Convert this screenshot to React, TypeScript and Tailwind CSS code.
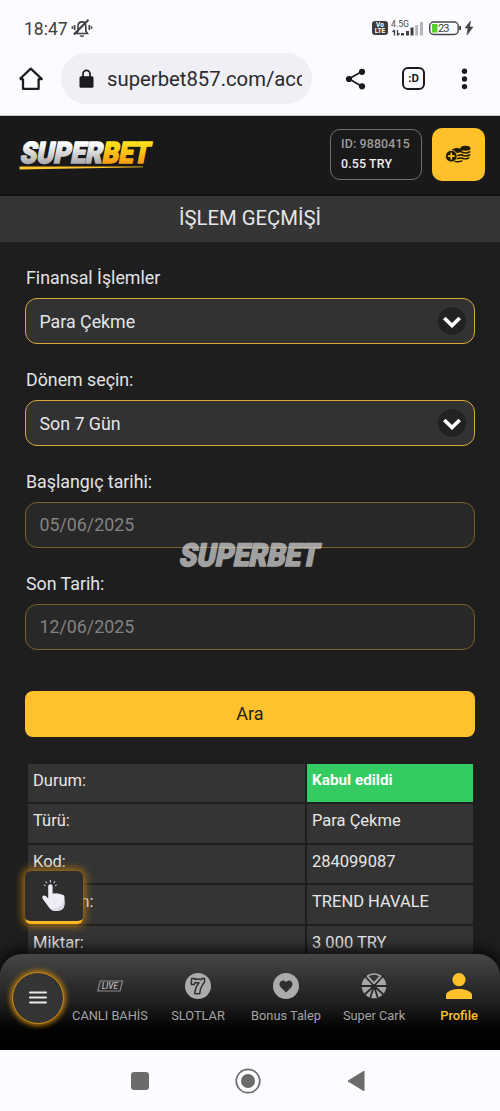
import React from 'react';

interface Row {
  label: string;
  value: string;
  success?: boolean;
}

const rows: Row[] = [
  { label: 'Durum:', value: 'Kabul edildi', success: true },
  { label: 'Türü:', value: 'Para Çekme' },
  { label: 'Kod:', value: '284099087' },
  { label: 'Yöntem:', value: 'TREND HAVALE' },
  { label: 'Miktar:', value: '3 000 TRY' },
];

function StatusBar() {
  return (
    <div className="flex h-14 shrink-0 items-center pl-6 pr-[25px] text-[#3d3d40]">
      <span className="mt-[2px] text-[17.5px]">18:47</span>
      <svg className="ml-[3px] h-[22px] w-[22px]" viewBox="0 0 22 22" fill="none" stroke="currentColor" strokeWidth="1.6">
        <path d="M5.5 16.5h11l-1.7-2.6V9.5c0-3-1.5-4.6-3.8-4.6S7 6.5 7 9.5v4.4z" />
        <path d="M2.8 17.5L17.5 2.8" strokeWidth="2" />
        <path d="M9.2 18.5q1.8 1.5 3.6 0" />
        <path d="M3.6 8v5M1.4 9.3v2.4M18.3 8v5M20.5 9.3v2.4" />
      </svg>
      <div className="ml-auto flex items-center">
        <div className="flex h-[14px] w-[16px] flex-col items-center justify-center rounded-[3px] bg-[#3d3d40] text-[6.5px] font-bold leading-[6px] text-white">
          <span>Vo</span>
          <span>LTE</span>
        </div>
        <svg className="ml-[2px] h-[18px] w-[34px]" viewBox="0 0 34 18">
          <text x="1" y="8" fontSize="8.5" fill="#4a4a4c" textLength="18" lengthAdjust="spacingAndGlyphs">4.5G</text>
          <path d="M4.500 11v5.500M2.500 13L4.500 11M7.500 11v5.500M7.500 16.500l2-2.300" stroke="#3d3d40" strokeWidth="1.3" fill="none" />
          <path d="M11 14h3v2.500h-3zM16 12h3v4.500h-3zM20.500 8.500h3v8h-3z" fill="#3d3d40" />
          <path d="M25.200 6h2.800v10.500h-2.800zM30 3h3v13.500h-3z" fill="#b5b5b7" />
        </svg>
        <svg className="ml-[5px] h-[16px] w-[46px]" viewBox="0 0 46 16">
          <rect x="0.7" y="2" width="28.5" height="12.5" rx="4" fill="none" stroke="#454547" strokeWidth="1.4" />
          <rect x="3" y="4" width="5.500" height="8.500" fill="#57cf2c" />
          <rect x="30.2" y="5.8" width="1.8" height="4.5" rx="0.8" fill="#454547" />
          <text x="9" y="12.2" fontSize="11" fill="#3d3d40" textLength="11.5">23</text>
          <path d="M41.500 1l-5.500 7h3L38 15l6-8h-3.300z" fill="#454547" stroke="#454547" strokeWidth="0.6" />
        </svg>
      </div>
    </div>
  );
}

function BrowserBar() {
  return (
    <div className="flex h-[60px] shrink-0 items-start border-b border-[#c9c9cc]">
      <svg className="ml-[18px] mt-[10px] h-[26px] w-[26px]" viewBox="0 0 26 26" fill="none" stroke="#1b1b1e" strokeWidth="2.3" strokeLinejoin="round">
        <path d="M5 12.500v10.300h15.600V12.500M1.800 13L12.800 2.700 23.800 13H20.600M1.800 13H5" />
      </svg>
      <div className="-mt-[3px] ml-[17px] flex h-[51px] w-[251px] items-center rounded-full bg-[#efeff5] pl-[18px] pr-[10px]">
        <svg className="h-[20px] w-[15px] shrink-0" viewBox="0 0 15 20">
          <path d="M4 8V4.800a3.500 3.500 0 0 1 7 0V8" fill="none" stroke="#1b1b1e" strokeWidth="1.7" />
          <rect x="0.5" y="7.3" width="14" height="11.5" rx="1.5" fill="#1b1b1e" />
        </svg>
        <span className="ml-[13px] mt-[2px] overflow-hidden whitespace-nowrap text-[20.3px] text-[#2a2a2d]">superbet857.com/acc</span>
      </div>
      <svg className="ml-[33px] mt-[11px] h-[24px] w-[22px]" viewBox="0 0 22 24" fill="#1b1b1e">
        <path d="M17 4.500L4 11.800 17 19.500" fill="none" stroke="#1b1b1e" strokeWidth="1.8" />
        <circle cx="17" cy="4.8" r="3.1" />
        <circle cx="4" cy="12" r="3.1" />
        <circle cx="17" cy="19.3" r="3.1" />
      </svg>
      <div className="ml-[35px] mt-[11px] flex h-[23px] w-[23px] items-center justify-center rounded-[6px] border-2 border-[#1b1b1e] text-[11.5px] font-bold text-[#1b1b1e]">:D</div>
      <svg className="ml-[36px] mt-[11px] h-[24px] w-[8px]" viewBox="0 0 8 24" fill="#1b1b1e">
        <circle cx="3.5" cy="4.3" r="2.7" />
        <circle cx="3.5" cy="12" r="2.7" />
        <circle cx="3.5" cy="19.6" r="2.7" />
      </svg>
    </div>
  );
}

function Logo() {
  return (
    <svg className="h-[36px] w-[138px] overflow-visible" viewBox="0 0 138 36">
      <defs>
        <linearGradient id="silver" x1="0" y1="0" x2="0" y2="1">
          <stop offset="0.25" stopColor="#ffffff" />
          <stop offset="0.85" stopColor="#a9a9ad" />
        </linearGradient>
        <linearGradient id="gold" x1="0" y1="0" x2="0" y2="1">
          <stop offset="0.25" stopColor="#ffe01a" />
          <stop offset="0.85" stopColor="#f79a13" />
        </linearGradient>
      </defs>
      <g fontWeight="900" fontSize="29.5" transform="translate(1.500 25.500) skewX(-11)" strokeWidth="1.7" strokeLinejoin="round">
        <text textLength="82" lengthAdjust="spacingAndGlyphs" fill="url(#silver)" stroke="url(#silver)">SUPER</text>
        <text x="82" textLength="47" lengthAdjust="spacingAndGlyphs" fill="url(#gold)" stroke="url(#gold)">BET</text>
      </g>
      <path d="M1.500 29.500L125 29.500v0.800L1.500 32.500z" fill="#ffc62b" />
    </svg>
  );
}

function Header() {
  return (
    <header className="flex h-20 shrink-0 items-center border-b-2 border-[#101010] bg-[#191919] pl-[18px] pr-[15px]">
      <Logo />
      <div className="ml-auto mt-[-2px] flex h-[51px] w-[92px] flex-col justify-center rounded-[10px] border border-[#6f6f6f] pl-[10px] text-[12.4px] font-medium leading-5 tracking-[0.15px]">
        <span className="whitespace-nowrap text-[#9c9c9c]">ID: 9880415</span>
        <span className="text-[#ededed]">0.55 TRY</span>
      </div>
      <button className="ml-[10px] mt-[-1px] flex h-[53px] w-[53px] items-center justify-center rounded-[10px] bg-[#ffc12a]">
        <svg className="-ml-[2px] -mt-[2px] h-[20px] w-[28px]" viewBox="0 0 28 20">
          <g fill="#211b0b">
            <ellipse cx="21.5" cy="4.3" rx="5" ry="2.5" />
            <path d="M17 7q4.500 2.400 9.300-.2v1.800q-4.500 2.400-9.300 0zM17 10q4.500 2.400 9.300-.2v1.800q-4.500 2.400-9.300 0zM17 13q4.500 2.400 8.300-.2v1.600q-4 2.400-8.300 0z" />
            <ellipse cx="13" cy="6.5" rx="5.3" ry="2.6" />
            <path d="M11 10q4 1.300 7.500-.6v1.700q-3 1.800-7 1zM12 13.300q3.500.8 6.300-.6v1.600q-3 1.500-6.500.9zM10 16.500q5 1.300 8.300-.6v1.600q-4 1.600-8.300.6z" />
          </g>
          <circle cx="7.3" cy="12.2" r="5.9" fill="#211b0b" stroke="#ffc12a" strokeWidth="0.9" />
          <path d="M7.300 8.800v6.800M3.900 12.200h6.800" stroke="#ffc12a" strokeWidth="1.7" />
        </svg>
      </button>
    </header>
  );
}

function SelectField({ label, value }: { label: string; value: string }) {
  return (
    <div className="h-[102px]">
      <label className="block h-[34px] pl-px text-[17.8px] leading-[27px] text-[#e3e3e3]">{label}</label>
      <div className="flex h-[46px] items-center justify-between rounded-[12px] border border-[#d9a83a] bg-[#323232] pl-[13.5px] pr-[8px] text-[17.8px] text-[#e5e5e5]">
        <span className="mt-[2px]">{value}</span>
        <span className="flex h-7 w-7 items-center justify-center rounded-full bg-[#222222]">
          <svg className="h-[14px] w-[20px]" viewBox="0 0 20 14" fill="none" stroke="#fff" strokeWidth="3.7">
            <path d="M2.300 4L10 11.500l7.700-7.500" />
          </svg>
        </span>
      </div>
    </div>
  );
}

function DateField({ label, value }: { label: string; value: string }) {
  return (
    <div className="h-[102px]">
      <label className="block h-[34px] pl-px text-[17.8px] leading-[28px] text-[#e3e3e3]">{label}</label>
      <div className="flex h-[46px] items-center rounded-[12px] border border-[#7a6028] bg-[#282828] pl-[13.5px] text-[17.8px] text-[#828282]">
        {value}
      </div>
    </div>
  );
}

function HandIcon() {
  return (
    <svg className="h-[32px] w-[26px]" viewBox="0 0 26 32">
      <path d="M7.200 6.500a2.200 2.200 0 0 1 4.400 0V14q1-1.300 3.200-.4 1.300-1 3.100.5 1.500-.9 3 .8 2.600-.4 2.600 2.400v6.500q0 7.200-7.500 7.200h-2q-4 0-6.500-4.200L1.800 19q-1.400-3.500 1.300-3.500 2 0 4.100 3z" fill="#eeedf6" />
      <path d="M23.500 20v4q0 6.500-7.500 6.500h-2q-3 0-4.500-2 10 1.500 14-8.500z" fill="#d9d7e5" />
      <path d="M9.300 0v2.300M4.800 1.300l1 2M13.800 1.300l-1 2M2.800 4.800l1.700.8M15.800 4.800l-1.700.8" stroke="#e6e6ee" strokeWidth="1" />
    </svg>
  );
}

interface NavItemProps {
  label: string;
  active?: boolean;
  children: React.ReactNode;
}

function NavItem({ label, active, children }: NavItemProps) {
  return (
    <div className={active ? 'flex w-[82px] shrink-0 flex-col items-center' : 'flex w-[88px] shrink-0 flex-col items-center'}>
      <svg className="h-[28px] w-[28px]" viewBox="0 0 28 28">{children}</svg>
      <span className={active
        ? 'mt-[6px] whitespace-nowrap text-[12.9px] font-medium leading-5 text-[#ffc12a]'
        : 'mt-[6px] whitespace-nowrap text-[12.8px] leading-5 text-[#a3a3a3]'}
      >
        {label}
      </span>
    </div>
  );
}

function BottomNav() {
  return (
    <nav className="relative -mt-8 flex h-[96px] shrink-0 items-start rounded-t-[22px] bg-linear-to-b from-[#464646] via-[#202020] to-black shadow-[0_-2px_12px_4px_rgba(0,0,0,0.65)]">
      <button className="ml-[12px] mt-[18px] flex h-[52px] w-[52px] shrink-0 items-center justify-center rounded-full border border-[#c98a18] bg-[#343434] shadow-[0_0_5px_2px_#b0750e]">
        <svg className="h-[14px] w-[18px]" viewBox="0 0 18 14" stroke="#e8e8e8" strokeWidth="2" strokeLinecap="round">
          <path d="M1 1.500h16M1 6.500h16M1 11.500h16" />
        </svg>
      </button>
      <div className="ml-[2px] mt-[18px] flex">
        <NavItem label="CANLI BAHİS">
          <path d="M4.300 9H26.500l-2.500 10H1.800z" fill="none" stroke="#8c8c8c" strokeWidth="1.2" />
          <text x="5.8" y="17" fontSize="8.3" fontWeight="700" fontStyle="italic" fill="#a8a8a8" textLength="16" lengthAdjust="spacingAndGlyphs">LIVE</text>
        </NavItem>
        <NavItem label="SLOTLAR">
          <circle cx="14" cy="14" r="13" fill="#ababab" />
          <path d="M7.700 6.500l-.5 6h3l.6-1.700h4.200q-4 4.800-4.200 11h5q.2-6.500 4.700-11.500V6.500h-2.500l-1 1.200q-3-1.400-6-.2V6.500z" fill="#ababab" stroke="#303030" strokeWidth="1.5" strokeLinejoin="round" />
        </NavItem>
        <NavItem label="Bonus Talep">
          <circle cx="14" cy="14" r="13" fill="#ababab" />
          <path d="M14 20.500l-5-5c-4.300-4.600 1.600-9.800 5-5.500 3.400-4.300 9.300.9 5 5.500z" fill="#2e2e2e" />
        </NavItem>
        <NavItem label="Super Cark">
          <circle cx="14" cy="14" r="12.3" fill="#a5a5a5" />
          <path d="M14 14L4.500 3.500M14 14l9.500-10.500M0 14h28M14 14L3 24M14 14l11 10M14 14L9.500 28M14 14l4.500 14" stroke="#292929" strokeWidth="1.8" />
          <path d="M7.500 4q6.500-4 13 0L14 11z" fill="#343434" stroke="#a5a5a5" strokeWidth="1.7" strokeLinejoin="round" />
          <circle cx="14" cy="14" r="1.800" fill="#292929" />
        </NavItem>
        <NavItem label="Profile" active>
          <circle cx="14" cy="7.6" r="6.6" fill="#ffc12a" />
          <path d="M1 27v-4.300C2 18.700 9 17 14 17s12 1.700 13 5.700V27z" fill="#ffc12a" />
        </NavItem>
      </div>
    </nav>
  );
}

function App() {
  return (
    <div className="flex h-[1111px] w-[500px] flex-col overflow-hidden bg-[#fcfbff] font-[Roboto,sans-serif]">
      <StatusBar />
      <BrowserBar />
      <Header />
      <h1 className="flex h-[46px] shrink-0 items-center justify-center bg-[#353535] pb-[2px] text-[20.3px] text-[#e6e6e6]">İŞLEM GEÇMİŞİ</h1>

      <main className="relative min-h-0 flex-1 overflow-hidden bg-[#1e1e1e]">
        <div className="px-[25px] pt-[22px]">
          <SelectField label="Finansal İşlemler" value="Para Çekme" />
          <SelectField label="Dönem seçin:" value="Son 7 Gün" />
          <DateField label="Başlangıç tarihi:" value="05/06/2025" />
          <DateField label="Son Tarih:" value="12/06/2025" />
          <button className="mt-[19px] block h-[46px] w-full rounded-[8px] bg-[#ffc12c] pb-[2px] text-[18px] text-[#241e10]">Ara</button>
          <div className="mt-[27px] grid grid-cols-[277px_166px] gap-[2px] pl-[3px] text-[16.5px] text-[#e6e6e6]">
            {rows.map((row) => (
              <React.Fragment key={row.label}>
                <div className="h-[38.4px] bg-[#343434] pl-[5px] pt-[5px] leading-6">{row.label}</div>
                <div className={row.success
                  ? 'h-[38.4px] bg-[#34cb62] pl-[5px] pt-[4px] text-[15.3px] font-bold leading-6 text-white'
                  : 'h-[38.4px] bg-[#343434] pl-[5px] pt-[5px] leading-6'}
                >
                  {row.value}
                </div>
              </React.Fragment>
            ))}
          </div>
        </div>

        {/* loading watermark */}
        <svg className="absolute left-[175px] top-[296px] h-[32px] w-[150px] overflow-visible opacity-65" viewBox="0 0 150 32">
          <text transform="translate(3.500 27.500) skewX(-11)" textLength="139" lengthAdjust="spacingAndGlyphs" fontWeight="900" fontSize="31.5" fill="#e6e6e6" stroke="#e6e6e6" strokeWidth="1.7" strokeLinejoin="round">SUPERBET</text>
        </svg>

        <div className="absolute left-[25px] top-[629px] flex h-[53px] w-[58px] items-center justify-center rounded-[6px] border-b-[3px] border-[#ffb81f] bg-[#2e2e2e] shadow-[0_0_9px_2px_#b0750e]">
          <HandIcon />
        </div>
      </main>

      <BottomNav />

      <div className="relative flex h-[61px] shrink-0 items-center bg-[#fcfbff] pl-[131px]">
        <div className="h-[18px] w-[18px] rounded-[3px] bg-[#6b6b6b]" />
        <svg className="ml-[86px] h-[26px] w-[26px]" viewBox="0 0 26 26">
          <circle cx="13" cy="13" r="11.7" fill="none" stroke="#6b6b6b" strokeWidth="1.7" />
          <circle cx="13" cy="13" r="7" fill="#6b6b6b" />
        </svg>
        <svg className="ml-[86px] h-[22px] w-[18px]" viewBox="0 0 18 22">
          <path d="M17 1.200v19.600L1 11z" fill="#6b6b6b" stroke="#6b6b6b" strokeLinejoin="round" />
        </svg>
      </div>
    </div>
  );
}

export default App;
